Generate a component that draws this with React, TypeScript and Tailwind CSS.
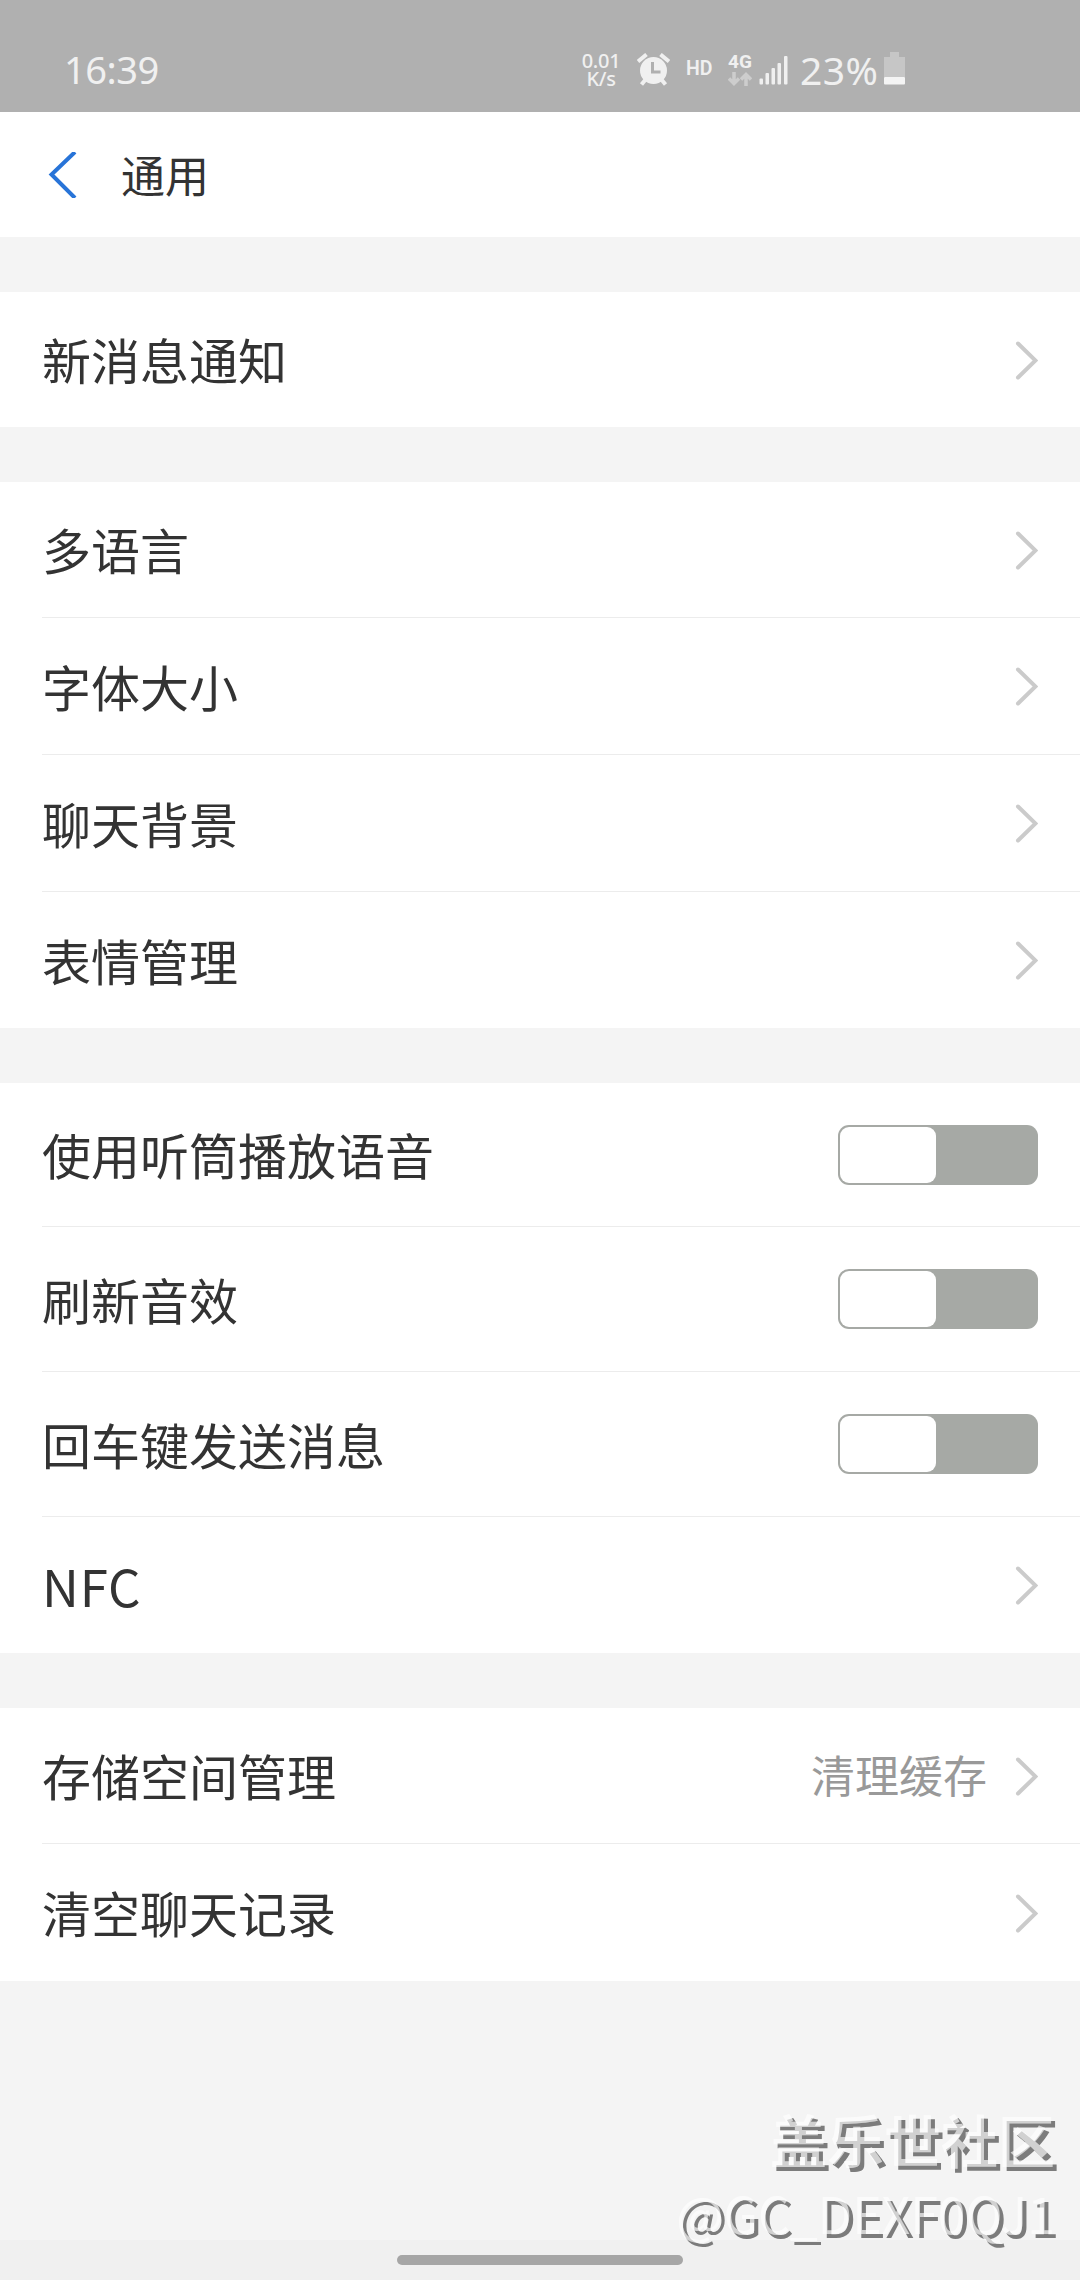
import { useState } from "react";

type Item = {
  id: string;
  label: string;
  type: "link" | "switch";
  height: string;
  note?: string;
};

const groups: Item[][] = [
  [{ id: "notice", label: "新消息通知", type: "link", height: "h-[135px]" }],
  [
    { id: "language", label: "多语言", type: "link", height: "h-[136px]" },
    { id: "font", label: "字体大小", type: "link", height: "h-[137px]" },
    { id: "background", label: "聊天背景", type: "link", height: "h-[137px]" },
    { id: "sticker", label: "表情管理", type: "link", height: "h-[136px]" },
  ],
  [
    { id: "earpiece", label: "使用听筒播放语音", type: "switch", height: "h-[144px]" },
    { id: "refresh", label: "刷新音效", type: "switch", height: "h-[145px]" },
    { id: "enter", label: "回车键发送消息", type: "switch", height: "h-[145px]" },
    { id: "nfc", label: "NFC", type: "link", height: "h-[136px]" },
  ],
  [
    {
      id: "storage",
      label: "存储空间管理",
      type: "link",
      height: "h-[136px]",
      note: "清理缓存",
    },
    { id: "clear", label: "清空聊天记录", type: "link", height: "h-[137px]" },
  ],
];

function StatusBar() {
  return (
    <div className="flex h-[112px] shrink-0 items-start bg-[#b0b0b0] pl-[64px] font-['Noto_Sans',sans-serif] text-[#f0f0f0]">
      <span className="mt-[43px] w-[517px] text-[38px] leading-[52px] tracking-[-0.5px]">
        16:39
      </span>
      <div className="mt-[52px] w-[40px] text-center text-[20px] leading-[18px] font-medium tracking-[-0.3px]">
        <div>0.01</div>
        <div>K/s</div>
      </div>
      {/* Alarm */}
      <svg className="mt-[53px] ml-[16px] h-[33px] w-[33px]" viewBox="0 0 33 33">
        <g stroke="#f0f0f0" strokeWidth="4">
          <path d="M1 8.5L9.500 1.500M32 8.500L23.500 1.500" />
          <path d="M9 26L4.500 31.500M24 26L28.500 31.500" />
        </g>
        <circle cx="16.500" cy="17.500" r="13.500" fill="#f0f0f0" />
        <path d="M15.500 9v10h8" fill="none" stroke="#b0b0b0" strokeWidth="3" />
      </svg>
      <span className="mt-[59px] ml-[16px] w-[42px] font-[Roboto,sans-serif] text-[19.5px] leading-[20px] font-semibold">
        HD
      </span>
      <div className="mt-[53px] w-[26px]">
        <div className="font-[Roboto,sans-serif] text-[19px] leading-[17px] font-bold">
          4G
        </div>
        <svg className="mt-[2px] h-[14px] w-[24px]" viewBox="0 0 24 14">
          <g fill="none" stroke="#cdcdcd" strokeWidth="3.500">
            <path d="M6 0v12M1 6.500l5 5 5-5" />
            <path d="M18 14V2M13 7.500l5-5 5 5" />
          </g>
        </svg>
      </div>
      {/* Signal */}
      <svg className="mt-[55px] ml-[5px] h-[30px] w-[30px]" viewBox="0 0 30 30" fill="#f0f0f0">
        <rect x="0.500" y="23.500" width="3.500" height="6" rx="1" />
        <rect x="6.500" y="18" width="3.500" height="11.500" rx="1" />
        <rect x="12.500" y="13" width="3.500" height="16.500" rx="1" />
        <rect x="18.500" y="8" width="3.500" height="21.500" rx="1" />
        <rect x="25" y="1" width="3.500" height="28.500" rx="1" />
      </svg>
      <span className="mt-[44px] ml-[11px] w-[84px] text-[39px] leading-[52px] tracking-[0.5px] whitespace-nowrap">
        23%
      </span>
      {/* Battery */}
      <svg className="mt-[52px] h-[33px] w-[22px]" viewBox="0 0 22 33">
        <path d="M6 5V0h9v5h6v20H0V5z" fill="#c6c6c6" />
        <rect y="25" width="21" height="7.500" rx="1" fill="#f4f4f4" />
      </svg>
    </div>
  );
}

function Arrow() {
  return (
    <svg className="h-[40px] w-[24px]" viewBox="0 0 24 40">
      <path
        d="M4 3.500L21.500 20.500 4 37.500"
        fill="none"
        stroke="#cbcbcb"
        strokeWidth="4"
        strokeLinecap="round"
      />
    </svg>
  );
}

function Switch({ on, onClick }: { on: boolean; onClick: () => void }) {
  return (
    <button
      role="switch"
      aria-checked={on}
      onClick={onClick}
      className={`flex h-[60px] w-[200px] rounded-[11px] p-[2px] ${
        on ? "justify-end bg-[#2b7de1]" : "justify-start bg-[#a6a9a5]"
      }`}
    >
      <span className="h-[56px] w-[96px] rounded-[9px] bg-white" />
    </button>
  );
}

export default function App() {
  const [enabled, setEnabled] = useState<Record<string, boolean>>({});

  return (
    <div className="relative flex h-[2280px] w-[1080px] flex-col overflow-hidden bg-[#f4f4f4] font-['Noto_Sans_CJK_SC',sans-serif] text-[#333]">
      <StatusBar />

      {/* Header */}
      <header className="flex h-[125px] shrink-0 items-center bg-white pl-[48px]">
        <svg className="h-[46px] w-[30px]" viewBox="0 0 30 46">
          <path
            d="M27 0L3.500 22.500 27 46"
            fill="none"
            stroke="#2874d8"
            strokeWidth="4"
          />
        </svg>
        <h1 className="-mt-[1px] ml-[43px] text-[44px] leading-[60px]">通用</h1>
      </header>

      {/* Settings */}
      {groups.map((items) => (
        <section key={items[0].id} className="mt-[55px] bg-white pl-[42px]">
          {items.map((item, i) => (
            <div
              key={item.id}
              className={`flex items-center justify-between pr-[42px] ${item.height} ${
                i < items.length - 1 ? "border-b border-[#ececec]" : ""
              }`}
            >
              <span
                className={`-mt-[1px] leading-[70px] ${
                  item.id === "nfc" ? "text-[51px] tracking-[0.8px]" : "text-[49px]"
                }`}
              >
                {item.label}
              </span>
              {item.type === "switch" ? (
                <Switch
                  on={!!enabled[item.id]}
                  onClick={() =>
                    setEnabled({ ...enabled, [item.id]: !enabled[item.id] })
                  }
                />
              ) : (
                <div className="flex items-center gap-[27px]">
                  {item.note && (
                    <span className="-mt-[3px] text-[44px] leading-[60px] text-[#999]">
                      {item.note}
                    </span>
                  )}
                  <Arrow />
                </div>
              )}
            </div>
          ))}
        </section>
      ))}

      {/* Gesture bar */}
      <div className="mt-auto flex h-[40px] shrink-0 items-center justify-center bg-[#f0f0f0]">
        <div className="h-[10px] w-[286px] rounded-full bg-[#a6a6a6]" />
      </div>

      {/* Watermark */}
      <div className="absolute right-[25px] bottom-[32px] text-right whitespace-nowrap text-white/65 [text-shadow:4px_4px_0_#7c7c7c]">
        <div className="text-[57px] leading-[76px] font-bold">盖乐世社区</div>
        <div className="text-[50px] leading-[72px]">@GC_DEXF0QJ1</div>
      </div>
    </div>
  );
}
